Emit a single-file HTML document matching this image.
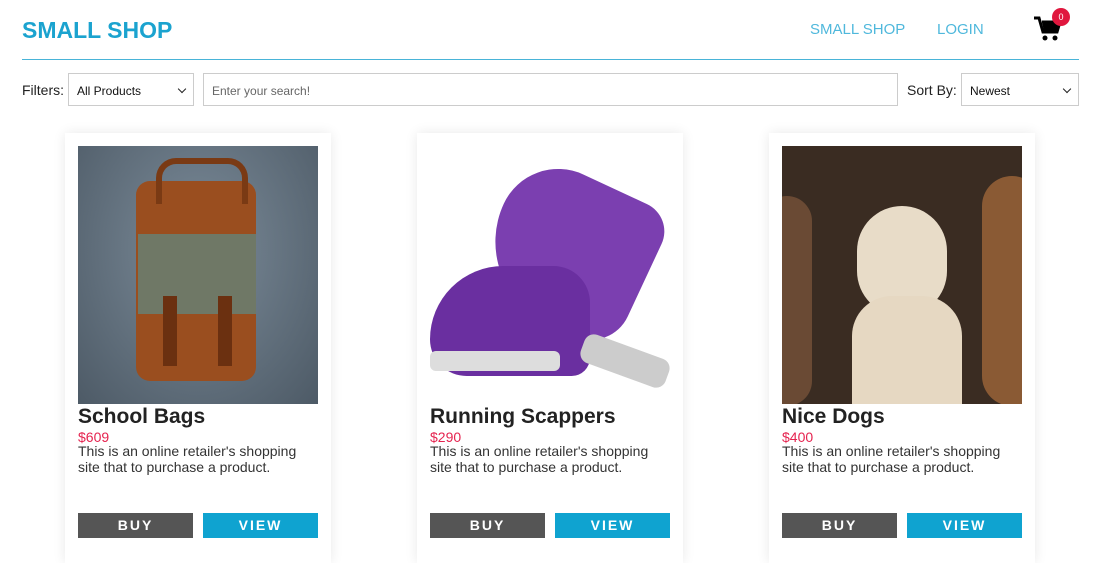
<!DOCTYPE html>
<html><head><style>
body{margin:0;width:1100px;height:550px;overflow:hidden;background:#fff;font-family:"Liberation Sans",sans-serif;position:relative}
.logo{position:absolute;left:22px;top:17px;font-size:23px;font-weight:bold;color:#1ba3cf}
.nav{position:absolute;top:21px;font-size:15px;color:#4fb8dc}
.line{position:absolute;left:22px;top:59px;width:1057px;height:1px;background:#49b4d8}
.lbl{position:absolute;top:82px;font-size:14px;color:#222}
.sel,.inp{position:absolute;top:73px;height:33px;border:1px solid #ccc;box-sizing:border-box;background:#fff;font-size:12px;color:#111;padding:10px 8px}
.sel:after{content:"";position:absolute;right:8px;top:12px;width:5px;height:5px;border-right:1.5px solid #222;border-bottom:1.5px solid #222;transform:rotate(45deg)}
.card{position:absolute;top:133px;width:266px;height:430px;background:#fff;box-shadow:0 0 12px rgba(0,0,0,.09)}
.img{position:absolute;left:13px;top:13px;width:240px;height:258px;overflow:hidden}
.t{position:absolute;left:13px;top:272px;font-size:21px;font-weight:bold;color:#222}
.p{position:absolute;left:13px;top:296px;font-size:14px;color:#e5234f}
.d{position:absolute;left:13px;top:311px;width:240px;font-size:14px;line-height:15.5px;color:#333}
.b{position:absolute;top:380px;width:115px;height:25px;color:#fff;font-weight:bold;font-size:14px;letter-spacing:2px;text-align:center;line-height:25px}
</style></head><body>
<div class="logo">SMALL SHOP</div>
<div class="nav" style="left:810px">SMALL SHOP</div>
<div class="nav" style="left:937px">LOGIN</div>
<svg style="position:absolute;left:1034px;top:16px" width="28" height="26" viewBox="0 0 28 26"><path d="M0 2h5l4 14h14l3-10H8" fill="none" stroke="#000" stroke-width="3"/><path d="M8 6h18l-3 10H10z" fill="#000"/><circle cx="11" cy="22" r="2.5"/><circle cx="21" cy="22" r="2.5"/></svg>
<div style="position:absolute;left:1052px;top:8px;width:18px;height:18px;border-radius:50%;background:#e0173e;color:#fff;font-size:9px;text-align:center;line-height:18px">0</div>
<div class="line"></div>
<div class="lbl" style="left:22px">Filters:</div>
<div class="sel" style="left:68px;width:126px">All Products</div>
<div class="inp" style="left:203px;width:695px;color:#666">Enter your search!</div>
<div class="lbl" style="left:907px">Sort By:</div>
<div class="sel" style="left:961px;width:118px">Newest</div>

<div class="card" style="left:65px">
<div class="img" style="background:radial-gradient(ellipse at 50% 40%,#7c8c9a,#4d5a66)">
<div style="position:absolute;left:58px;top:35px;width:120px;height:200px;background:#9a4e1f;border-radius:14px"></div>
<div style="position:absolute;left:78px;top:12px;width:80px;height:40px;border:6px solid #7a3a14;border-bottom:none;border-radius:20px 20px 0 0"></div>
<div style="position:absolute;left:60px;top:88px;width:118px;height:80px;background:#6f7866"></div>
<div style="position:absolute;left:85px;top:150px;width:14px;height:70px;background:#6b3010"></div>
<div style="position:absolute;left:140px;top:150px;width:14px;height:70px;background:#6b3010"></div>
</div>
<div class="t">School Bags</div><div class="p">$609</div>
<div class="d">This is an online retailer's shopping site that to purchase a product.</div>
<div class="b" style="left:13px;background:#555">BUY</div>
<div class="b" style="left:138px;background:#0fa3d0">VIEW</div>
</div>

<div class="card" style="left:417px">
<div class="img" style="background:#fff">
<div style="position:absolute;left:60px;top:30px;width:160px;height:150px;background:#7b3fb0;border-radius:60px 30px 40px 90px;transform:rotate(25deg)"></div>
<div style="position:absolute;left:0px;top:120px;width:160px;height:110px;background:#6a2fa0;border-radius:80px 40px 20px 40px"></div>
<div style="position:absolute;left:0px;top:205px;width:130px;height:20px;background:#ddd;border-radius:6px"></div>
<div style="position:absolute;left:150px;top:200px;width:90px;height:30px;background:#ccc;border-radius:10px;transform:rotate(20deg)"></div>
</div>
<div class="t">Running Scappers</div><div class="p">$290</div>
<div class="d">This is an online retailer's shopping site that to purchase a product.</div>
<div class="b" style="left:13px;background:#555">BUY</div>
<div class="b" style="left:138px;background:#0fa3d0">VIEW</div>
</div>

<div class="card" style="left:769px">
<div class="img" style="background:#3a2c22">
<div style="position:absolute;left:-20px;top:50px;width:50px;height:210px;background:#6a4a34;border-radius:30px"></div>
<div style="position:absolute;left:200px;top:30px;width:60px;height:230px;background:#8a5a34;border-radius:30px"></div>
<div style="position:absolute;left:75px;top:60px;width:90px;height:110px;background:#e8dcc8;border-radius:45px"></div>
<div style="position:absolute;left:70px;top:150px;width:110px;height:120px;background:#e6d8c2;border-radius:40px 40px 0 0"></div>
</div>
<div class="t">Nice Dogs</div><div class="p">$400</div>
<div class="d">This is an online retailer's shopping site that to purchase a product.</div>
<div class="b" style="left:13px;background:#555">BUY</div>
<div class="b" style="left:138px;background:#0fa3d0">VIEW</div>
</div>
</body></html>
